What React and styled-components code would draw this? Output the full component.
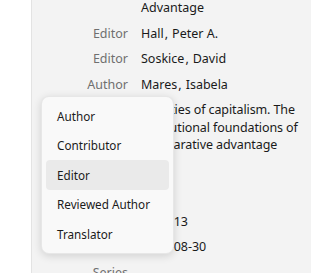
import React from 'react';
import styled, { createGlobalStyle } from 'styled-components';

const Global = createGlobalStyle`
    html, body {
        margin: 0;
        padding: 0;
        background: #ffffff;
        overflow: hidden;
    }
    body {
        font-family: "Noto Sans", "Open Sans", sans-serif;
        font-size: 12.5px;
        color: #1a1a1a;
    }
`;

const Page = styled.div`
    display: flex;
    width: 311px;
    height: 273px;
    overflow: hidden;
    position: relative;
`;

const Gutter = styled.div`
    width: 31px;
    flex-shrink: 0;
    background: #ffffff;
`;

const Pane = styled.section`
    flex: 1;
    background: #f3f3f3;
    border-left: 1px solid #e3e3e3;
`;

const Fields = styled.div`
    display: grid;
    grid-template-columns: 96px 1fr;
    column-gap: 13px;
    margin-top: -4.75px;
`;

const Label = styled.div`
    text-align: right;
    color: #6f6f6f;
    line-height: 17.5px;
    padding: 4px 0;
    white-space: nowrap;
`;

const Value = styled.div`
    line-height: 17.5px;
    padding: 4px ${p => (p.$wrap ? '1px' : '12px')} 4px 0;
    color: #1a1a1a;
    letter-spacing: ${p => (p.$wrap ? '-0.1px' : 'normal')};
    white-space: ${p => (p.$wrap ? 'normal' : 'nowrap')};
`;

const Comma = styled.span`
    margin-left: 1px;
    margin-right: 4px;
`;

const Menu = styled.ul`
    position: absolute;
    left: 41px;
    top: 96px;
    width: 133px;
    margin: 0;
    padding: 4px;
    box-sizing: border-box;
    list-style: none;
    font-size: 11.7px;
    background: #f9f9f9;
    border: 1px solid rgba(0, 0, 0, 0.07);
    border-radius: 8px;
    box-shadow: 0 2px 8px rgba(0, 0, 0, 0.14);
`;

const MenuItem = styled.li`
    height: 29.5px;
    display: flex;
    align-items: center;
    padding-left: 11px;
    border-radius: 4px;
    color: #1b1b1b;
    background: ${p => (p.$active ? '#eaeaea' : 'transparent')};
`;

function Creator({ type, last, first }) {
    return (
        <>
            <Label>{type}</Label>
            <Value>
                {last}<Comma>,</Comma>{first}
            </Value>
        </>
    );
}

const creatorTypes = ['Author', 'Contributor', 'Editor', 'Reviewed Author', 'Translator'];

export default function App() {
    return (
        <Page>
            <Global />
            <Gutter />
            <Pane>
                <Fields>
                    <Label></Label>
                    <Value>Advantage</Value>
                    <Creator type="Editor" last="Hall" first="Peter A." />
                    <Creator type="Editor" last="Soskice" first="David" />
                    <Creator type="Author" last="Mares" first="Isabela" />
                    <Label>Abstract</Label>
                    <Value $wrap>
                        Varieties of capitalism. The institutional foundations of comparative advantage
                    </Value>
                    <Label>Place</Label>
                    <Value></Value>
                    <Label>Edition</Label>
                    <Value></Value>
                    <Label>Pages</Label>
                    <Value>199-213</Value>
                    <Label>Date</Label>
                    <Value>2001-08-30</Value>
                    <Label>Series</Label>
                    <Value></Value>
                </Fields>
            </Pane>
            <Menu>
                {creatorTypes.map(t => (
                    <MenuItem key={t} $active={t === 'Editor'}>{t}</MenuItem>
                ))}
            </Menu>
        </Page>
    );
}
